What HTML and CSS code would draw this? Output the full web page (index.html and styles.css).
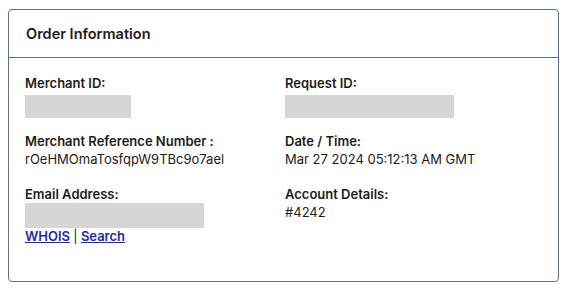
FILE: index.html
```html
<!DOCTYPE html>
<html lang="en">
<head>
  <meta charset="UTF-8">
  <title>Order Information</title>
  <link rel="stylesheet" href="styles.css">
</head>
<body>
  <div class="card">
    <div class="card-header">Order Information</div>
    <div class="card-body">
      <div class="field">
        <div class="label">Merchant ID:</div>
        <div class="mask mask-merchant"></div>
      </div>
      <div class="field">
        <div class="label">Request ID:</div>
        <div class="mask mask-request"></div>
      </div>
      <div class="field">
        <div class="label">Merchant Reference Number :</div>
        <div class="value">rOeHMOmaTosfqpW9TBc9o7ael</div>
      </div>
      <div class="field">
        <div class="label">Date / Time:</div>
        <div class="value">Mar 27 2024 05:12:13 AM GMT</div>
      </div>
      <div class="field">
        <div class="label">Email Address:</div>
        <div class="mask mask-email"></div>
        <div class="links"><a href="#">WHOIS</a> <span class="sep">|</span> <a href="#">Search</a></div>
      </div>
      <div class="field">
        <div class="label">Account Details:</div>
        <div class="value">#4242</div>
      </div>
    </div>
  </div>
</body>
</html>
```

FILE: styles.css
```css
body {
  margin: 0;
  padding: 9px 7px 0 8px;
  font-family: 'Inter', sans-serif;
  color: #1c1c1c;
  background: #ffffff;
}

.card {
  border: 1px solid #5b7086;
  border-radius: 4px;
  height: 271px;
}

.card-header {
  height: 47px;
  padding-left: 17px;
  display: flex;
  align-items: center;
  font-size: 14.5px;
  font-weight: 600;
  border-bottom: 1px solid #5b7086;
}

.card-body {
  display: grid;
  grid-template-columns: 260px 1fr;
  row-gap: 14px;
  padding: 16px 16px 0 16px;
}

.label {
  font-size: 13px;
  font-weight: 600;
  line-height: 18px;
}

.value {
  font-size: 13px;
  line-height: 18px;
  min-height: 21px;
}

.mask {
  background: #d6d6d6;
}

.mask-merchant {
  margin-top: 3px;
  width: 106px;
  height: 23px;
}

.mask-request {
  margin-top: 3px;
  width: 169px;
  height: 23px;
}

.mask-email {
  width: 179px;
  height: 25px;
}

.links {
  font-size: 13px;
  font-weight: 600;
  line-height: 16px;
}

.links a {
  color: #1d2c99;
}

.links .sep {
  font-weight: 400;
}
```
